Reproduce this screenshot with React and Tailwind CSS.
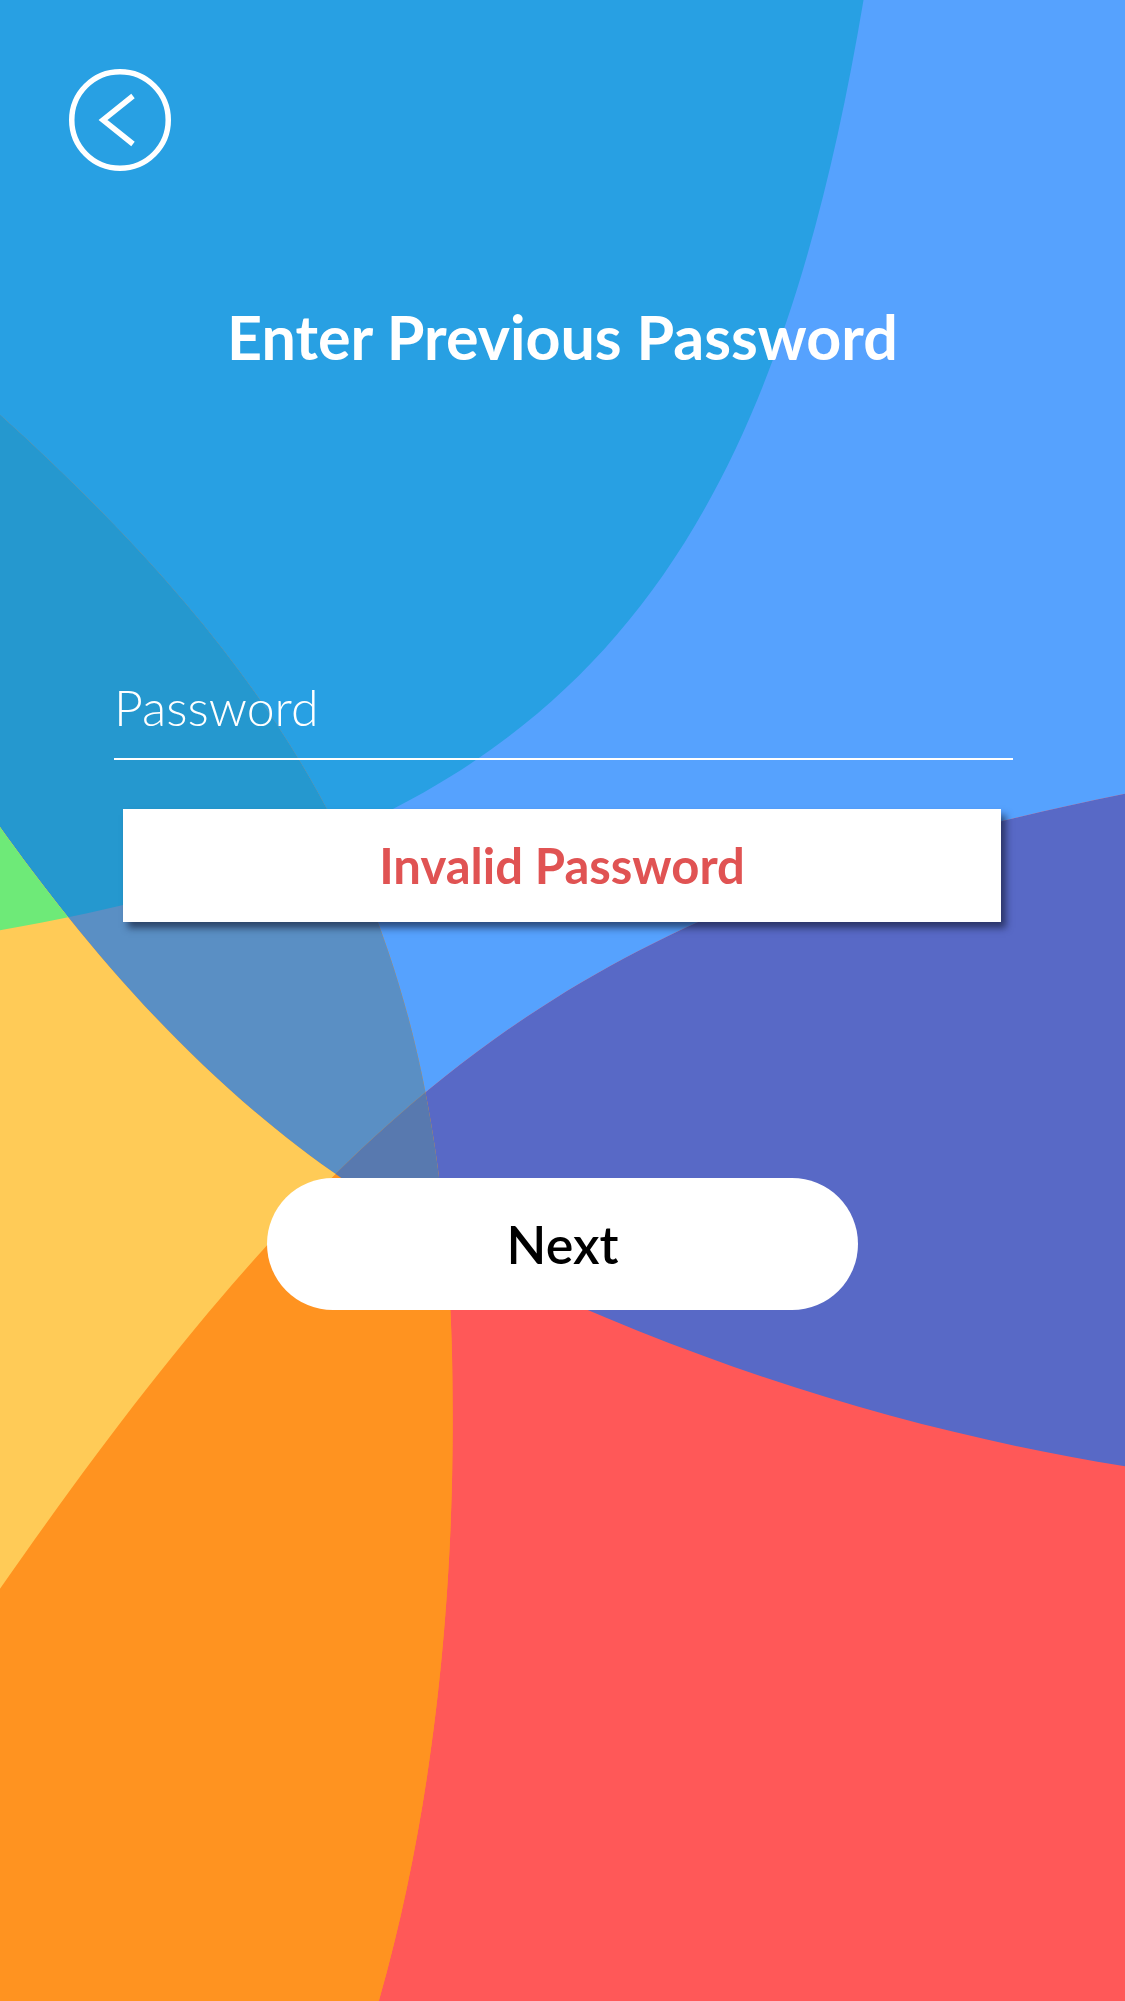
import React from "react";

// background boundaries, in a 882x1568 viewBox stretched to the page
const CO = "L882,622 C469,706 289,830 0,1245";
const lightPath = `M-10,-10 L892,-10 L892,620 ${CO} L-10,1262 Z`;
const indigoPath = `M892,620 ${CO} L300,1000 L352,977 C539,1068 704,1120 882,1149 L892,1151 Z`;
const cyanPath = "M-10,-10 L679,-10 L677,0 C598,472 428,654 0,729 L-10,730 Z";
const leftPath = "M-10,318 L0,325 C266,565 355,761 355,1110 C355,1230 345,1400 297,1568 L292,1590 L-10,1590 Z";
const yelPath = "M-10,634 L0,648 C70,746 187,890 350,972 L460,1050 L460,1600 L-10,1600 Z";

function Background() {
  return (
    <svg className="absolute inset-0 h-full w-full" viewBox="0 0 882 1568" preserveAspectRatio="none">
      <defs>
        <clipPath id="clipLeft">
          <path d={leftPath} />
        </clipPath>
        <clipPath id="clipYel">
          <path d={yelPath} />
        </clipPath>
      </defs>
      <rect x="-10" y="-10" width="902" height="1600" fill="#FF5858" />
      <path d={indigoPath} fill="#5869C6" />
      <path d={lightPath} fill="#56A2FE" />
      <path d={cyanPath} fill="#28A0E3" />
      <g clipPath="url(#clipLeft)">
        <rect x="-10" y="-10" width="902" height="1600" fill="#FF9320" />
        <path d={lightPath} fill="#5A8FC4" />
        <path d={indigoPath} fill="#5879AF" />
        <path d={cyanPath} fill="#2598CF" />
        <g clipPath="url(#clipYel)">
          <rect x="-10" y="-10" width="902" height="1600" fill="#FF9320" />
          <path d={lightPath} fill="#FFCB57" />
          <path d={cyanPath} fill="#6EEA78" />
        </g>
      </g>
    </svg>
  );
}

export default function App() {
  return (
    <div className="relative h-[2001px] w-full overflow-hidden font-['Lato','Noto_Sans',sans-serif]">
      <Background />
      <div className="relative flex flex-col">
        <button type="button" className="ml-[69px] mt-[69px] h-[102px] w-[102px]">
          <svg viewBox="0 0 102 102" className="h-full w-full" fill="none" stroke="white" strokeWidth="5.5">
            <circle cx="51" cy="51" r="48.25" />
            <polyline points="64,27 34,51 64,75" />
          </svg>
        </button>

        <h1 className="mt-[135px] text-center text-[61px] font-bold leading-none text-white">
          Enter Previous Password
        </h1>

        <div className="ml-[114px] mr-[112px] mt-[315px] flex flex-col">
          <label className="text-[50px] font-light leading-none text-white">Password</label>
          <div className="mt-[26px] h-[2px] bg-white" />
        </div>

        <div className="ml-[123px] mt-[49px] flex h-[113px] w-[878px] items-center justify-center bg-white shadow-[5px_6px_7px_rgba(15,20,45,0.6)]">
          <span className="text-[49px] font-bold leading-none text-[#E05353]">Invalid Password</span>
        </div>

        <button
          type="button"
          className="mx-auto mt-[256px] flex h-[132px] w-[591px] items-center justify-center rounded-full bg-white"
        >
          <span className="text-[52px] font-semibold leading-none text-black">Next</span>
        </button>
      </div>
    </div>
  );
}
